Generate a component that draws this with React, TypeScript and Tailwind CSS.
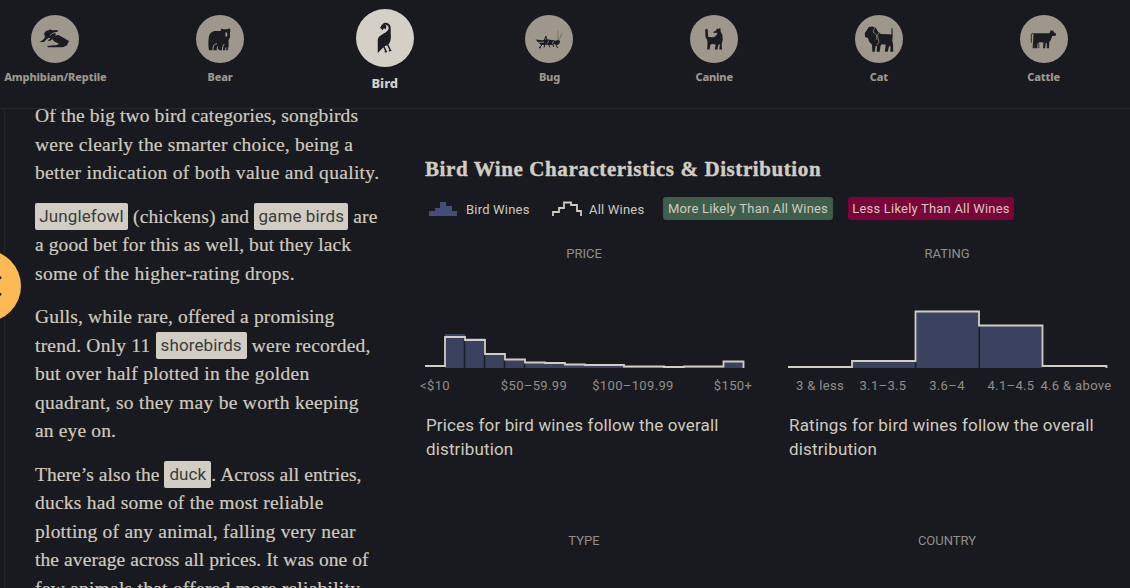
import type { ReactNode } from "react";

interface Animal {
  name: string;
  icon: ReactNode;
  active?: boolean;
}

interface Distribution {
  title: string;
  caption: string[];
  captionTracking: string;
  labels: { text: string; left: string }[];
  bars: string;
  gaps: string;
  outline: string;
}

const INK = "#1b1c22";
const PAPER = "#9d978c";

const ANIMALS: Animal[] = [
  {
    name: "Amphibian/Reptile",
    icon: (
      <>
        <path d="M13 18.500l2-2.500 3-.8 1-1 2 1 5.500-.2.5 1.500-3.500 1 1.500 1.500-1 1.500 3.500-.5 4 2.300 6.500 3.700-2.200 4.500-4 1.800H17l-1-1.300 10-1 2-1.200-5-2.500-1.500-2-3.500 2-1-1 2.500-2-2-.5-3 2.500-1 1.500-5 .5 3.500-2.500 2-2.500z" />
        <path d="M19 20.500l3-2.500 3-.5" stroke={PAPER} strokeWidth="0.8" fill="none" />
      </>
    ),
  },
  {
    name: "Bear",
    icon: (
      <>
        <path d="M13 35.300c-.8-4-.8-8-.3-12 .5-5 3-7.300 7.300-7.300h4.500l1-2.500 2 .8 4-.1 2-1 1 1.800-.6 3 .3 3.500-1.700 4 .2 5-1 4.800h-8.500l-.8-1.500-1.400 1.500z" />
        <path d="M30.300 17.500v4" stroke={PAPER} strokeWidth="1.800" />
        <path d="M16.800 35.500l.4-3.500c.3-2.500 1.800-3 3.800-3.200M21 35.500l.5-4M26.300 35.500l.7-4.500 1.300-2M29.500 35.500l.5-3" stroke={PAPER} strokeWidth="1" fill="none" />
      </>
    ),
  },
  {
    name: "Bird",
    active: true,
    icon: (
      <>
        <path d="M22 12.600C23.500 10.700 27.500 10.800 28.500 14.500c.6 2.300 0 4.300.3 6.500.3 3-.2 5.500-1.300 7.500l-1.500 1.500-2.500.8-5.500 5.700V25.500c.5-2.500 2-3.500 4.300-4.800 2.600-1.500 4.800-2.900 4.700-5.200-.1-2.100-2.400-2.900-5-2.900z" />
        <path d="M20 15.500l1.300-2.500 2.200-.8 1.700 1.800-.7 2.800-1.500-.8-1 1.500z" />
        <path d="M22.700 30.500l2.300 4.800-1.300.2M26.200 29.500l2.300 4.800-1.300.2" stroke={INK} strokeWidth="1.200" fill="none" />
      </>
    ),
  },
  {
    name: "Bug",
    icon: (
      <>
        <path d="M10.500 24.500l7 .7 4-1 7 1 2.500.5 2-1 2 1.300-.5 2.500-2 1.500-2.500-1-3 1-5-.3-6 .3z" />
        <path d="M18 29l2.800-8 3 9 1.200 2.300M25 28l1.500-3 2.300 7M30.500 29l2.200 4M17 30l-3 2.800 2-.1M20 29l-1 3.500" stroke={INK} strokeWidth="1" fill="none" />
        <path d="M33 25V15.500M34 24.500c1.500-2 2.500-4 2.500-6.500" stroke={INK} strokeWidth="0.500" fill="none" opacity=".6" />
        <path d="M14 27.500l5-.5M22 28.500l2-2.500M27.500 29l1-3" stroke={PAPER} strokeWidth="0.800" />
      </>
    ),
  },
  {
    name: "Canine",
    icon: (
      <path d="M15.200 15l1.300-1.400 1.200 1.100.5 7.300 6 .2 2.800-2.600.3-1.800-3.500.2-.5-1 3-1.800.8-2 1.200 1 2-1.400.4 4 1.700 3.200.3 5-1 4 .3 5.600h-2.600l.4-5.600-1.600 1.200-.8 4.400h-2.500l.7-5.200-3.800-.5-1.500 1.200-.7 4.500h-2.400l.3-6-.3-3.600-1.700-3z" />
    ),
  },
  {
    name: "Cat",
    icon: (
      <>
        <path d="M9.800 18l1.800-2.500 2.200-3.500 3.700-.5 3.500 1.500 2 3.800 3 2.200 8 .3 2.500.3v-6.600l1 .2.2 8.300-.5 4 .8 3.500.3 7.800h-3l.2-6-1.700 1-1 5h-2.900l.8-7-3.700-.5-1.500 1.500-.8 6h-3l.3-6-1.500.5-.7 5.500h-2.500l-.3-7-3-3.300-1-3.500-3-1z" />
        <path d="M19.500 13l-1.500 4 3.500 3 .3 5M23.500 18l-1 3 1.500 6-2 3" stroke={PAPER} strokeWidth="0.700" fill="none" />
      </>
    ),
  },
  {
    name: "Cattle",
    icon: (
      <>
        <path d="M13.500 18.200h15.800l1.200-1.400-.6-1.600 1.600.5 1.700-.3.500 1.600 2.600 2-.7 1.700-3.300.3-1.800 4.500-1.200 1.500-.2 6.200h-2.400l.2-5h-1.200l-.6 5H23l.5-5.600-4-.4-2 1.500-.2 4.500h-2.600l.3-5.500-.6 5.500h-1.800l.5-7z" />
        <path d="M13.500 18.700h-1.700l-.5 1v8M18.800 28.500v4.700" stroke={INK} strokeWidth="0.900" fill="none" />
      </>
    ),
  },
];

const DISTRIBUTIONS: Distribution[] = [
  {
    title: "PRICE",
    caption: ["Prices for bird wines follow the overall", "distribution"],
    captionTracking: "tracking-[0.14px]",
    labels: [
      { text: "<$10", left: "left-[10px]" },
      { text: "$50–59.99", left: "left-[109px]" },
      { text: "$100–109.99", left: "left-[208px]" },
      { text: "$150+", left: "left-[308px]" },
    ],
    bars: "M20 68V34H40V38H60V54H80V60H100V63H120V64H140V65H160V66H199V67H298V62H318V68Z",
    gaps: "M39.500 38V68M59.500 54V68M79.500 60V68M99.500 63V68",
    outline: "M0 66H20V37H40V40H60V54H80V59.500H100V62.500H120V63H140V64.500H160V65H199V66.500H239V67H259V66.500H298.500V61.500H318.500V68",
  },
  {
    title: "RATING",
    caption: ["Ratings for bird wines follow the overall", "distribution"],
    captionTracking: "tracking-[0.2px]",
    labels: [
      { text: "3 & less", left: "left-[32px]" },
      { text: "3.1–3.5", left: "left-[95px]" },
      { text: "3.6–4", left: "left-[159px]" },
      { text: "4.1–4.5", left: "left-[223px]" },
      { text: "4.6 & above", left: "left-[288px]" },
    ],
    bars: "M64 68V61H127V12H191V26H254V68Z",
    gaps: "M127.500 62V68M191.300 27V68",
    outline: "M0 67H64V61H127.500V11.500H191V25.500H254.500V66H318.500V68",
  },
];

function Tag({ children, className }: { children: ReactNode; className: string }) {
  return (
    <span className={`inline-flex h-[27px] items-center justify-center rounded-[2px] bg-[#d2cdc2] pt-px font-['Roboto',sans-serif] text-[17px] leading-none tracking-[0.1px] text-[#3b3b3b] [-webkit-text-stroke:0] ${className}`}>
      {children}
    </span>
  );
}

function Line({ children, className = "" }: { children: ReactNode; className?: string }) {
  return <span className={`flex h-[28.45px] items-center whitespace-pre ${className}`}>{children}</span>;
}

function AnimalNav() {
  return (
    <header className="relative z-10 h-[109px] shrink-0 border-b border-[#26272c] bg-[#191a20]">
      <nav className="-ml-[27px] grid w-[1153px] grid-cols-7">
        {ANIMALS.map(({ name, icon, active }) => (
          <button
            key={name}
            className={`flex flex-col items-center whitespace-nowrap font-['Noto_Sans',sans-serif] font-extrabold ${
              active ? "pt-[8.500px] text-[13px] text-[#d5d0c5]" : "pt-[15px] text-[11px] tracking-[-0.15px] text-[#9d978c]"
            }`}
          >
            <svg viewBox="0 0 48 48" fill={INK} className={active ? "size-[58px] rounded-full bg-[#d5d0c5]" : "size-12 rounded-full bg-[#9d978c]"}>
              {icon}
            </svg>
            <span className={active ? "mt-[6.500px] leading-5" : "mt-[6px] leading-4"}>{name}</span>
          </button>
        ))}
      </nav>
    </header>
  );
}

function Story() {
  return (
    <article className="-mt-[0.500px] ml-[35px] w-[390px] shrink-0 space-y-[15.300px] font-['Liberation_Serif',serif] text-[19.500px] text-[#cfcabf] [-webkit-text-stroke:0.2px]">
      <p>
        <Line className="tracking-[0.1px]">Of the big two bird categories, songbirds</Line>
        <Line className="tracking-[0.2px]">were clearly the smarter choice, being a</Line>
        <Line className="tracking-[0.31px]">better indication of both value and quality.</Line>
      </p>
      <p>
        <Line className="tracking-[0.14px]"><Tag className="w-[93px]">Junglefowl</Tag> (chickens) and <Tag className="w-[94px]">game birds</Tag> are</Line>
        <Line className="tracking-[0.1px]">a good bet for this as well, but they lack</Line>
        <Line className="tracking-[0.3px]">some of the higher-rating drops.</Line>
      </p>
      <p>
        <Line className="tracking-[0.15px]">Gulls, while rare, offered a promising</Line>
        <Line className="tracking-[0.22px]">trend. Only 11 <Tag className="w-[91px]">shorebirds</Tag> were recorded,</Line>
        <Line className="tracking-[0.26px]">but over half plotted in the golden</Line>
        <Line className="tracking-[0.3px]">quadrant, so they may be worth keeping</Line>
        <Line className="tracking-[0.15px]">an eye on.</Line>
      </p>
      <p>
        <Line className="tracking-[0.06px]">There’s also the <Tag className="w-[47px]">duck</Tag>. Across all entries,</Line>
        <Line className="tracking-[0.23px]">ducks had some of the most reliable</Line>
        <Line className="tracking-[0.23px]">plotting of any animal, falling very near</Line>
        <Line className="tracking-[0.09px]">the average across all prices. It was one of</Line>
        <Line className="tracking-[0.24px]">few animals that offered more reliability</Line>
      </p>
    </article>
  );
}

function Legend() {
  return (
    <div className="mt-[16px] flex h-[23px] items-center whitespace-nowrap text-[13px] tracking-[0.2px] text-[#cfcabf]">
      <svg viewBox="0 0 28 16" className="ml-[4px] h-4 w-7">
        <path d="M0 15V10H6V7H11V1H17V5H23V10H28V15Z" fill="#424e75" />
      </svg>
      <span className="ml-[9px] w-[86px] pt-[2px]">Bird Wines</span>
      <svg viewBox="0 0 30 16" className="h-4 w-[30px]" fill="none" stroke="#cfcabf" strokeWidth="1.800">
        <path d="M1 15V11H7V7H12V1.500H19V4H25V10H29V15" />
      </svg>
      <span className="ml-[7px] w-[74px] pt-[2px]">All Wines</span>
      <span className="flex h-[23px] w-[170px] items-center justify-center rounded-[3px] bg-[#3f5f4c] pt-px">More Likely Than All Wines</span>
      <span className="ml-[15px] flex h-[23px] w-[166px] items-center justify-center rounded-[3px] bg-[#7b0338] pt-px">Less Likely Than All Wines</span>
    </div>
  );
}

function Histogram({ title, caption, captionTracking, labels, bars, gaps, outline }: Distribution) {
  return (
    <figure className="w-[318px]">
      <h3 className="text-center text-[13px] leading-4 text-[#918e88]">{title}</h3>
      <svg viewBox="0 0 320 68" className="mt-[38px] h-[68px] w-[320px] overflow-visible">
        <path d={bars} fill="#3a425f" />
        <path d={gaps} stroke="#1a1f2e" strokeWidth="1.600" />
        <path d={outline} fill="none" stroke="#d2cdc3" strokeWidth="1.800" />
      </svg>
      <div className="relative mt-[10px] h-4 whitespace-nowrap text-[13px] leading-4 tracking-[0.35px] text-[#918e88]">
        {labels.map(({ text, left }) => (
          <span key={text} className={`absolute -translate-x-1/2 ${left}`}>{text}</span>
        ))}
      </div>
      <figcaption className={`ml-px mt-[19px] whitespace-nowrap text-[17px] leading-6 text-[#cfcabf] ${captionTracking}`}>
        {caption.map((line) => <div key={line}>{line}</div>)}
      </figcaption>
    </figure>
  );
}

export default function App() {
  return (
    <div className="relative flex h-[588px] w-[1130px] flex-col overflow-hidden bg-[#191a20]">
      <AnimalNav />
      <main className="-mt-[7px] flex min-h-0 flex-1">
        <Story />
        <section className="mt-[55px] w-[705px] font-['Roboto',sans-serif]">
          <h2 className="whitespace-nowrap font-['Liberation_Serif',serif] text-[21px] font-bold leading-6 tracking-[0.59px] text-[#d2cdc2] [-webkit-text-stroke:0.4px]">
            Bird Wine Characteristics &amp; Distribution
          </h2>
          <Legend />
          <div className="mt-[26px] flex gap-[45px]">
            {DISTRIBUTIONS.map((item) => <Histogram key={item.title} {...item} />)}
          </div>
          <div className="mt-[72px] flex gap-[45px] text-[13px] leading-4 text-[#918e88]">
            <h3 className="w-[318px] text-center">TYPE</h3>
            <h3 className="w-[318px] text-center">COUNTRY</h3>
          </div>
        </section>
      </main>
      <div className="absolute bottom-0 left-[4px] top-[109px] w-px bg-[#24252a]" />
      <button className="absolute left-[-51px] top-[250px] flex size-[72px] items-center justify-end rounded-full bg-[#fdb955]">
        <svg viewBox="0 0 20 24" className="mr-[19px] h-6 w-5" fill="none" stroke={INK} strokeWidth="2.500">
          <path d="M19 3l-10 9 10 9" />
        </svg>
      </button>
    </div>
  );
}
